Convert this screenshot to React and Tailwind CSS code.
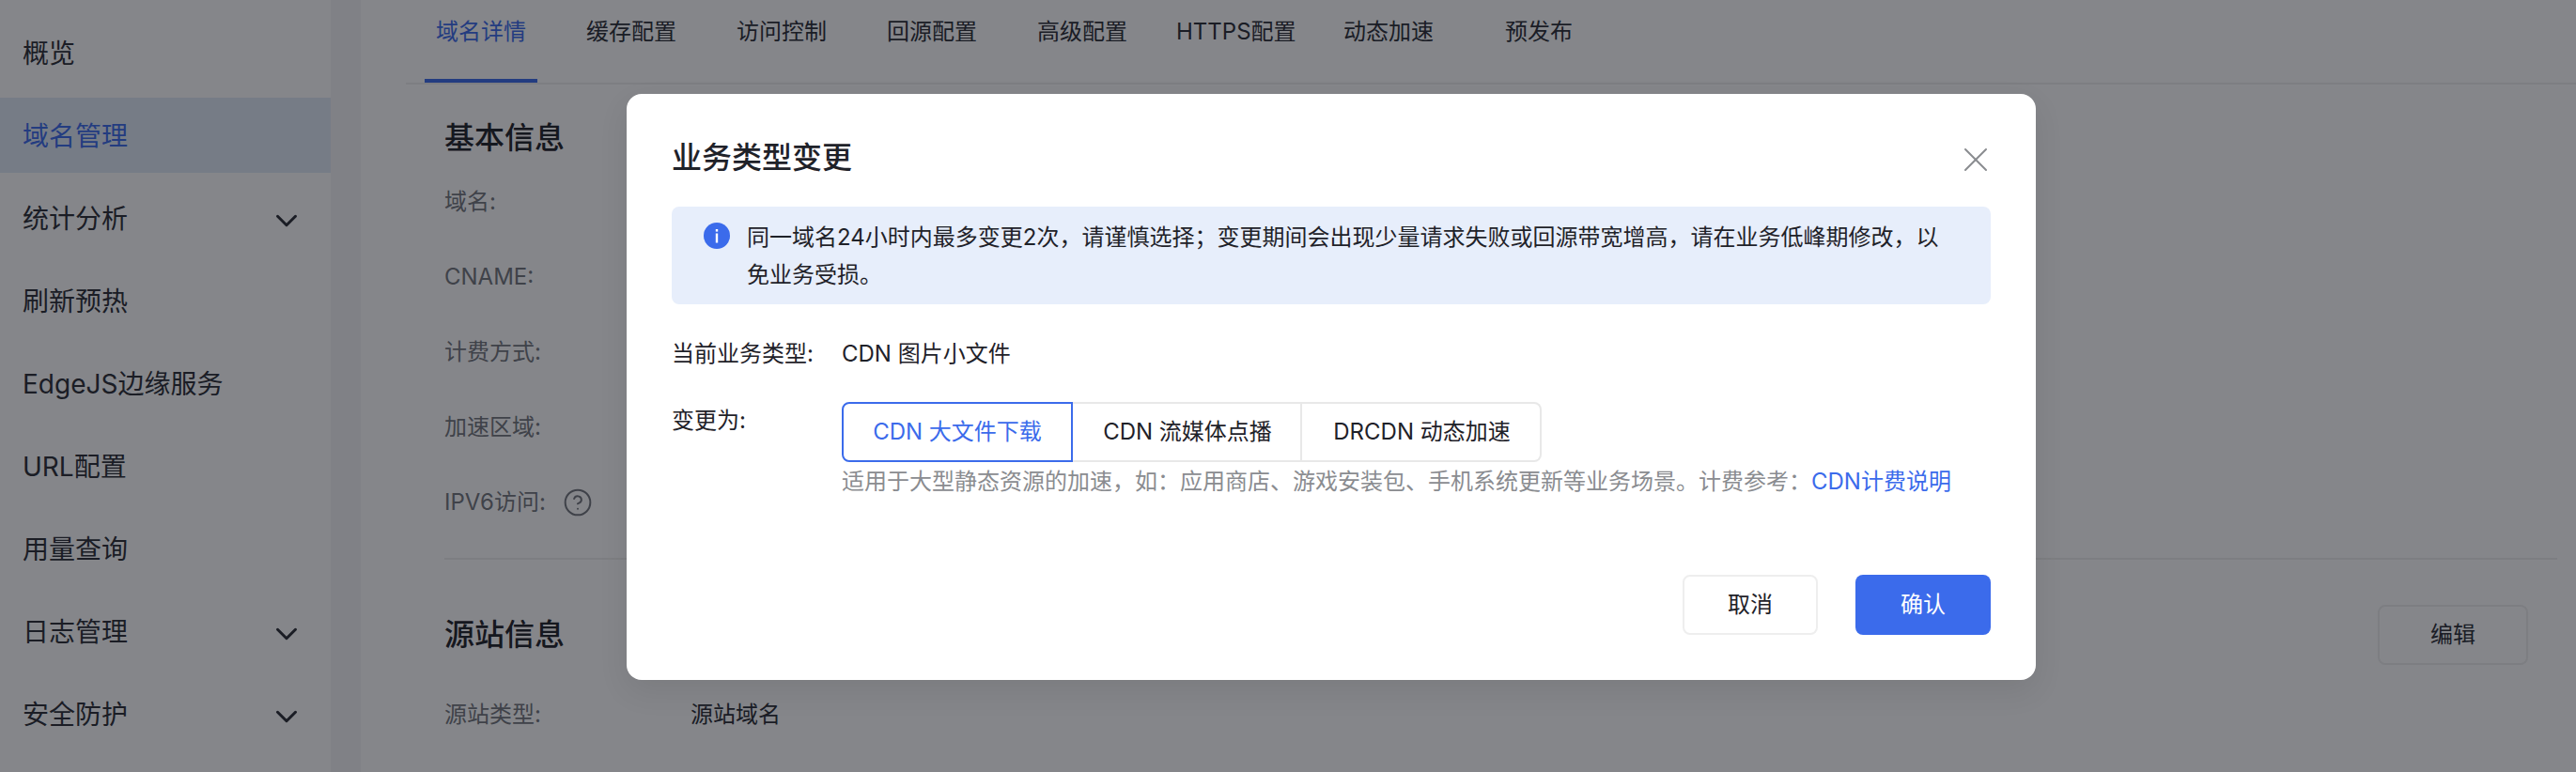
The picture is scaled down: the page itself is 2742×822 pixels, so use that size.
import React from "react";
import { ChevronDown, CircleHelp, X } from "lucide-react";

const menu = [
  { label: "概览" },
  { label: "域名管理", active: true },
  { label: "统计分析", arrow: true },
  { label: "刷新预热" },
  { label: "EdgeJS边缘服务" },
  { label: "URL配置" },
  { label: "用量查询" },
  { label: "日志管理", arrow: true },
  { label: "安全防护", arrow: true },
];

const tabs = [
  { label: "域名详情", cls: "w-[120px] text-[#3b6beb]", active: true },
  { label: "缓存配置", cls: "w-[120px]" },
  { label: "访问控制", cls: "w-[120px]" },
  { label: "回源配置", cls: "w-[120px]" },
  { label: "高级配置", cls: "w-[120px]" },
  { label: "HTTPS配置", cls: "w-[126px]" },
  { label: "动态加速", cls: "w-[120px]" },
  { label: "预发布", cls: "w-[120px]" },
];

const basicRows = ["域名:", "CNAME:", "计费方式:", "加速区域:"];

const App = () => {
  return (
    <div className="relative flex h-[822px] w-[2742px] overflow-hidden bg-white font-['Inter','Noto_Sans_CJK_SC',sans-serif] text-[#2a2d35]">
      {/* Sidebar */}
      <aside className="flex w-[352px] shrink-0 flex-col gap-2 pt-4">
        {menu.map((item) => (
          <div
            key={item.label}
            className={`flex h-20 shrink-0 items-center justify-between pl-6 pr-7 text-[28px] ${item.active ? "bg-[#e1ebf7] text-[#3b6beb]" : ""}`}
          >
            <span className="pt-0.5">{item.label}</span>
            {item.arrow && <ChevronDown size={38} strokeWidth={1.9} className="mt-1.5" />}
          </div>
        ))}
      </aside>
      <div className="w-8 shrink-0 bg-[#f5f5f6]"></div>

      {/* Main content */}
      <main className="min-w-0 flex-1">
        <div className="ml-12 flex h-[90px] gap-10 border-b-2 border-[#eeeeee] pl-5 text-2xl">
          {tabs.map((tab) => (
            <div key={tab.label} className={`relative h-[88px] shrink-0 whitespace-nowrap pt-[18px] text-center leading-8 ${tab.cls}`}>
              {tab.label}
              {tab.active && <div className="absolute bottom-0 left-0 h-1 w-full bg-[#3b6beb]"></div>}
            </div>
          ))}
        </div>

        <div className="pl-[89px] pr-5">
          <h2 className="mt-[33px] text-[32px] font-medium leading-[48px] text-[#1f2229]">基本信息</h2>
          <div className="mt-6 flex flex-col gap-10 text-2xl leading-10 text-[#73767d]">
            {basicRows.map((row) => (
              <div key={row} className="h-10">{row}</div>
            ))}
            <div className="flex h-10 items-center gap-[18px]">
              IPV6访问:
              <CircleHelp size={32} strokeWidth={1.5} />
            </div>
          </div>
          <div className="mt-[39px] h-0.5 bg-[#eeeeee]"></div>
          <div className="mt-12 flex h-16 items-center justify-between pr-[31px]">
            <h2 className="text-[32px] font-medium leading-[48px] text-[#1f2229]">源站信息</h2>
            <button className="h-16 w-40 rounded-lg border-2 border-[#eeeeee] text-2xl">编辑</button>
          </div>
          <div className="mt-[33px] flex h-10 text-2xl leading-10">
            <span className="w-[262px] text-[#73767d]">源站类型:</span>
            <span>源站域名</span>
          </div>
        </div>
      </main>

      {/* Overlay and dialog */}
      <div className="absolute inset-0 bg-[#0b0d15]/50 pl-[667px] pt-[100px]">
        <div className="h-[624px] w-[1500px] rounded-2xl bg-white px-12 pb-12 pt-11 text-[#1f2229] shadow-[0_12px_32px_rgba(0,0,0,0.08)]">
          <div className="flex h-12 items-center justify-between">
            <h3 className="text-[32px] font-medium leading-[48px]">业务类型变更</h3>
            <X size={44} strokeWidth={1.1} className="-mr-1.5 mt-1 text-[#8a8c90]" />
          </div>

          <div className="mt-7 flex gap-[18px] rounded-lg bg-[#e7eefb] pb-[11px] pl-[34px] pr-12 pt-[13px] text-2xl leading-10">
            <svg viewBox="0 0 28 28" className="mt-1 h-7 w-7 shrink-0">
              <circle cx="14" cy="14" r="14" fill="#3b6beb" />
              <rect x="12.8" y="11.5" width="2.4" height="10" fill="#fff" />
              <rect x="12.8" y="7" width="2.4" height="2.6" fill="#fff" />
            </svg>
            <p>同一域名24小时内最多变更2次，请谨慎选择；变更期间会出现少量请求失败或回源带宽增高，请在业务低峰期修改，以免业务受损。</p>
          </div>

          <div className="mt-[33px] flex text-2xl leading-10">
            <span className="w-[181px] shrink-0">当前业务类型:</span>
            <span>CDN 图片小文件</span>
          </div>

          <div className="mt-[31px] flex text-2xl leading-10">
            <span className="w-[181px] shrink-0">变更为:</span>
            <div>
              <div className="flex h-16 text-center leading-[60px]">
                <div className="w-[246px] rounded-l-lg border-2 border-[#3b6beb] text-[#3b6beb]">CDN 大文件下载</div>
                <div className="w-[244px] border-y-2 border-r-2 border-[#e8e8e8] pl-0.5">CDN 流媒体点播</div>
                <div className="w-[255px] rounded-r-lg border-y-2 border-r-2 border-[#e8e8e8] pl-0.5">DRCDN 动态加速</div>
              </div>
              <p className="mt-px text-[#8a8c90]">
                适用于大型静态资源的加速，如：应用商店、游戏安装包、手机系统更新等业务场景。计费参考：
                <span className="text-[#3b6beb]">CDN计费说明</span>
              </p>
            </div>
          </div>

          <div className="mt-[79px] flex justify-end gap-10 text-2xl">
            <button className="h-16 w-36 rounded-lg border-2 border-[#eeeeee]">取消</button>
            <button className="h-16 w-36 rounded-lg bg-[#3b6beb] text-white">确认</button>
          </div>
        </div>
      </div>
    </div>
  );
};

export default App;
